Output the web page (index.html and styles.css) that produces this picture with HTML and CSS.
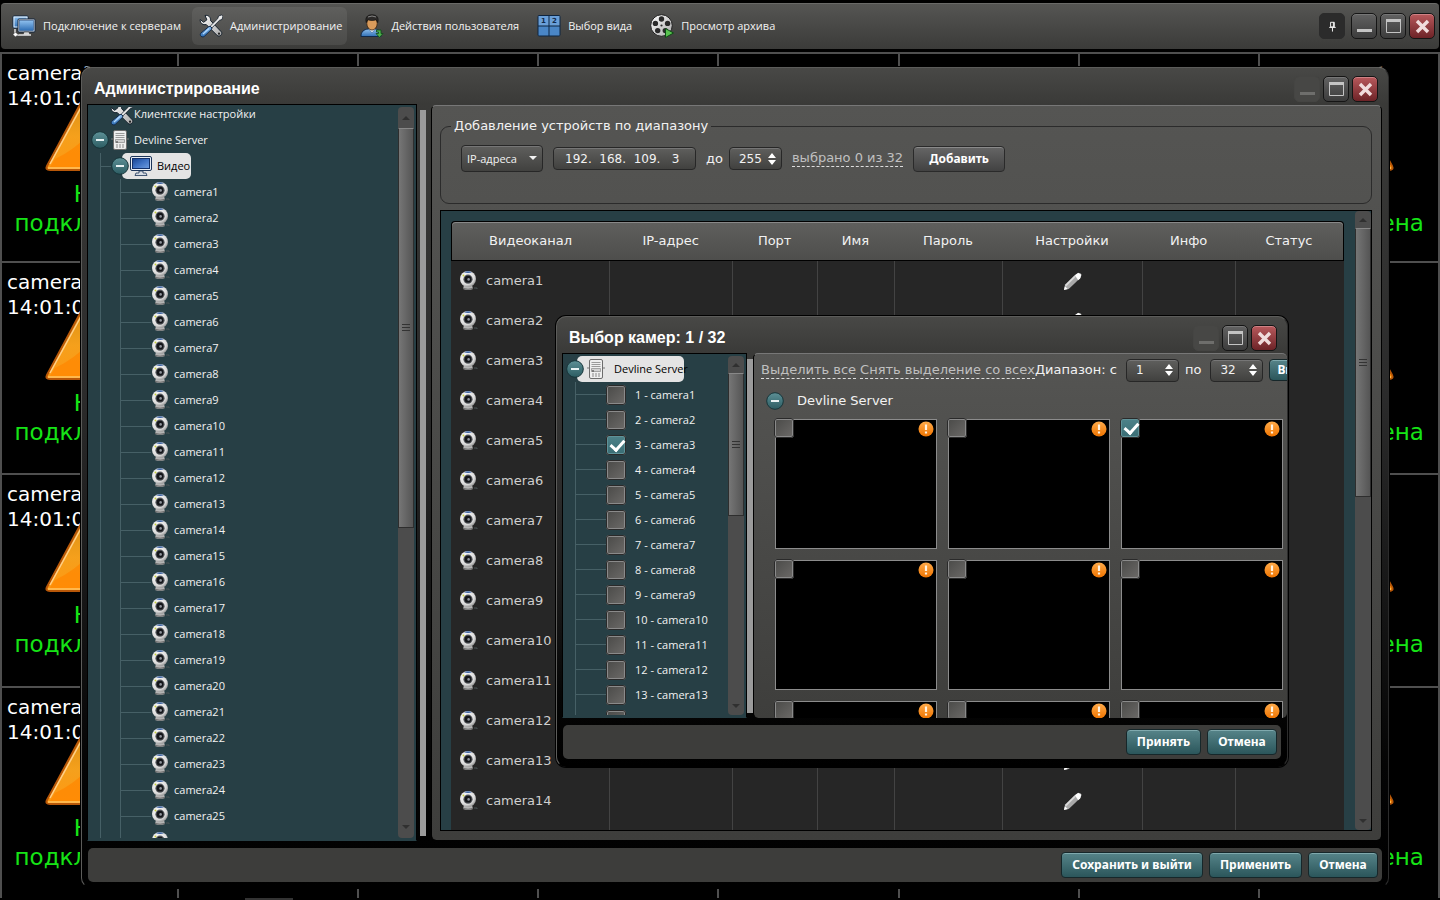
FILE: index.html
```html
<!DOCTYPE html>
<html lang="ru">
<head>
    <meta charset="UTF-8">
    <meta name="viewport" content="width=device-width, initial-scale=1.0">
    <title>Администрирование</title>
    <link rel="stylesheet" href="styles.css">
</head>
<body>

<!-- Icon set -->
<svg class="sprite" aria-hidden="true">
    <defs>
        <linearGradient id="blue" x1="0" y1="0" x2="0" y2="1">
            <stop offset="0" stop-color="#8fc0ee"/><stop offset="1" stop-color="#2f6fb5"/>
        </linearGradient>
        <linearGradient id="screen" x1="0" y1="0" x2="1" y2="1">
            <stop offset="0" stop-color="#16428f"/><stop offset=".5" stop-color="#3f72c4"/><stop offset="1" stop-color="#6f9de0"/>
        </linearGradient>
        <linearGradient id="steel" x1="0" y1="0" x2="1" y2="1">
            <stop offset="0" stop-color="#ffffff"/><stop offset="1" stop-color="#a8a8a8"/>
        </linearGradient>
        <radialGradient id="ball" cx=".4" cy=".35" r=".7">
            <stop offset="0" stop-color="#ffffff"/><stop offset=".7" stop-color="#dcdcdc"/><stop offset="1" stop-color="#8a8a8a"/>
        </radialGradient>
        <linearGradient id="teal" x1="0" y1="0" x2="0" y2="1">
            <stop offset="0" stop-color="#5d9096"/><stop offset="1" stop-color="#2c5c62"/>
        </linearGradient>
        <linearGradient id="orange" x1="0" y1="0" x2="0" y2="1">
            <stop offset="0" stop-color="#ffab4a"/><stop offset="1" stop-color="#ef7400"/>
        </linearGradient>
        <linearGradient id="fire" x1="0" y1="0" x2="0" y2="1">
            <stop offset="0" stop-color="#d08a10"/><stop offset=".6" stop-color="#f5a01c"/><stop offset="1" stop-color="#ff9812"/>
        </linearGradient>
    </defs>
    <symbol id="i-servers" viewBox="0 0 24 24">
        <rect x="1" y="2" width="15" height="12" rx="1" fill="url(#blue)" stroke="#10233a"/>
        <rect x="2" y="3" width="13" height="10" fill="none" stroke="#e4f0fb"/>
        <rect x="6" y="5" width="17" height="13" rx="1" fill="#e6edf5" stroke="#10233a"/>
        <rect x="7.500" y="6.500" width="14" height="10" fill="url(#blue)" stroke="#2b568c" stroke-width=".6"/>
        <path d="M12 18h5l1 3h-7z" fill="#d8d8d8" stroke="#222" stroke-width=".5"/>
        <path d="M3 15v6h16" fill="none" stroke="#e8e8e8" stroke-width="1.4"/>
        <path d="M1 20.500l2.500-2.500 2.500 2.500-2.500 2.500z" fill="#fff" stroke="#333" stroke-width=".5"/>
    </symbol>
    <symbol id="i-tools" viewBox="0 0 24 24">
        <path d="M6 1.500c3-.8 6 1.500 5.500 5l10.700 11.200c2 2.300-1.500 5.800-4 3.800L7.200 10.500C4 11.500.8 9 1.200 5.500l3.500 2.800 3.200-2.500z" fill="url(#steel)" stroke="#14202c"/>
        <circle cx="20" cy="19.700" r="1.100" fill="#222"/>
        <path d="M22.500 1l-3 1-.7 2.600-7.600 7.600 1.700 1.700 7.600-7.600 2.500-.8 1-3.200z" fill="#ececec" stroke="#14202c" stroke-width=".8"/>
        <path d="M10 12.500L2 19c-2.200 2.400 1.200 5.300 3.500 3.200L12.800 15c.6-1.200-1.500-3.300-2.800-2.500z" fill="url(#blue)" stroke="#11294a"/>
        <path d="M10 14.500L4 20.200" stroke="#b8dcff" stroke-width="1.100"/>
    </symbol>
    <symbol id="i-user" viewBox="0 0 24 24">
        <path d="M1 22.500c0-5 3-7 7-7.500h7c4 .5 6 3 6 7.500z" fill="url(#blue)" stroke="#10294a"/>
        <path d="M8.500 15l3.500 4 3.500-4" fill="#dbe9f6" stroke="#3b6799" stroke-width=".6"/>
        <ellipse cx="12" cy="9.500" rx="5.200" ry="6.500" fill="#d99b5b" stroke="#3b2411" stroke-width=".8"/>
        <path d="M6.300 8.500C4.800 4 7 .7 12 .7S19.200 4 17.700 8.500L16.300 5.800c-2.500 1-6 1-8.600 0z" fill="#2c2a29" stroke="#0c0c0c" stroke-width=".6"/>
        <path d="M8 3q4-2 8 0" stroke="#858585" fill="none"/>
        <path d="M16.500 16h4.500v3.500h2l-3.500 4-3.500-4h2.500v-1.500h-2z" fill="#4fb04c" stroke="#0e4a18" stroke-width=".8"/>
    </symbol>
    <symbol id="i-views" viewBox="0 0 24 24">
        <rect x=".5" y="1" width="23" height="21.500" rx="2" fill="#0d2440"/>
        <path d="M1.500 2h10v9.500h-10zM12.500 2h10v9.500h-10z" fill="#6a9fd8"/>
        <path d="M1.500 12.500h10v9h-10zM12.500 12.500h10v9h-10z" fill="#4a86c6"/>
        <text x="4" y="9" class="glyph">1</text>
        <text x="15" y="9" class="glyph">2</text>
    </symbol>
    <symbol id="i-reel" viewBox="0 0 24 24">
        <circle cx="11.500" cy="11.500" r="10.800" fill="url(#steel)" stroke="#1a1a1a"/>
        <g fill="#292929">
            <circle cx="11.500" cy="5" r="2.700"/><circle cx="17.600" cy="9.400" r="2.700"/><circle cx="15.300" cy="16.600" r="2.700"/>
            <circle cx="7.700" cy="16.600" r="2.700"/><circle cx="5.400" cy="9.400" r="2.700"/><circle cx="11.500" cy="11.500" r="1.100"/>
        </g>
        <path d="M15.500 14.500v9l8-4.500z" fill="#58c24f" stroke="#0d4b14"/>
    </symbol>
    <symbol id="i-webcam" viewBox="0 0 20 20">
        <path d="M5 14h8l1 4q-5 2-10 0z" fill="#b5b5b5"/>
        <path d="M4 17.500q5 1.500 10 0" stroke="#666" fill="none"/>
        <path d="M15 17h3v1" stroke="#4a5557" fill="none"/>
        <circle cx="9" cy="8" r="8" fill="url(#ball)"/>
        <path d="M5 1.300q4-2 8 0-4 1.400-8 0" fill="#3a63a4"/>
        <circle cx="9" cy="8.200" r="4.600" fill="#55585c"/>
        <circle cx="9" cy="8.200" r="3.400" fill="#14161a"/>
        <circle cx="9.600" cy="8.400" r="1.300" fill="#90959c"/>
        <circle cx="4.500" cy="4.400" r="1" fill="#c6cf3e"/>
    </symbol>
    <symbol id="i-server" viewBox="0 0 20 20">
        <path d="M1 9h3M16 9h3" stroke="#777"/>
        <rect x="3.500" y=".5" width="13" height="19" rx="1.500" fill="#eee" stroke="#6c6c6c"/>
        <path d="M5.500 3.500h9M5.500 5.500h9M5.500 7.500h9" stroke="#9a9a9a"/>
        <path d="M5.500 9.500h9v3h-9z" fill="#d2d2d2" stroke="#888" stroke-width=".7"/>
        <circle cx="7" cy="12" r="1" fill="#666"/>
        <path d="M6 15h8M6 17h8" stroke="#888" stroke-dasharray="2 1"/>
    </symbol>
    <symbol id="i-monitor" viewBox="0 0 22 20">
        <rect x=".5" y=".5" width="21" height="14" rx="1.500" fill="#e9eef5" stroke="#1c3559"/>
        <rect x="2.500" y="2.500" width="17" height="10" fill="url(#screen)" stroke="#12306a"/>
        <path d="M9 15h4v2h3l1 2.500H5L6 17h3z" fill="#d6dbe2" stroke="#1c3559" stroke-width=".8"/>
    </symbol>
    <symbol id="i-pencil" viewBox="0 0 20 20">
        <path d="M1 19l1-4.500L14 2l4-1 1.500 2-1 3L6 18z" fill="#a9a9a9"/>
        <path d="M12.500 3.500L16 .8l3.200 2-1.200 4-2 2z" fill="#fff"/>
        <path d="M2.500 14.500L13 4" stroke="#dadada" stroke-width="2"/>
        <path d="M1 19l1-4 3 3z" fill="#fff"/>
    </symbol>
    <symbol id="i-minus" viewBox="0 0 18 18">
        <circle cx="9" cy="9" r="8.300" fill="url(#teal)" stroke="#17353a"/>
        <path d="M5 9h8" stroke="#e8f2f3" stroke-width="2"/>
    </symbol>
    <symbol id="i-alert" viewBox="0 0 16 16">
        <circle cx="8" cy="8" r="7.500" fill="url(#orange)"/>
        <path d="M8 3.500v5.500M8 10.500v2" stroke="#fff3e2" stroke-width="2.200"/>
    </symbol>
    <symbol id="i-warning" viewBox="0 0 94 90">
        <path d="M47 3L90 83q2 4-3 4H7q-5 0-3-4z" fill="url(#fire)" stroke="#b85708" stroke-width="2" stroke-linejoin="round"/>
        <path d="M12 76Q30 68 50 48L90 84H7z" fill="#ff8600" opacity=".7"/>
        <path d="M47 8L7 81" stroke="#ffd08a" stroke-width="1.500"/>
        <path d="M5 85h84" stroke="#ffb84d" stroke-width="2"/>
        <path d="M47 30v30M47 68v8" stroke="#fff" stroke-width="8"/>
    </symbol>
    <symbol id="i-updown" viewBox="0 0 8 12">
        <path d="M0 5l4-5 4 5zM0 7l4 5 4-5z" fill="#fff"/>
    </symbol>
    <symbol id="i-min" viewBox="0 0 26 26"><path d="M6 17.500h15" stroke="currentColor" stroke-width="3"/></symbol>
    <symbol id="i-max" viewBox="0 0 26 26"><path d="M6.500 6.500h14v13h-14z" fill="none" stroke="currentColor"/><path d="M6 7.500h15" stroke="currentColor" stroke-width="3"/></symbol>
    <symbol id="i-close" viewBox="0 0 26 26"><path d="M8 8l11 11M19 8L8 19" stroke="currentColor" stroke-width="3.400"/></symbol>
    <symbol id="i-pin" viewBox="0 0 28 28"><path d="M12.500 10h4v5h-4zM11 15.500h7M14.500 16v4M15.500 10v5" fill="none" stroke="currentColor"/></symbol>
    <symbol id="i-up" viewBox="0 0 8 5"><path d="M0 5l4-4 4 4z" fill="currentColor"/></symbol>
    <symbol id="i-down" viewBox="0 0 8 5"><path d="M0 0l4 4 4-4z" fill="currentColor"/></symbol>
</svg>

<header class="toolbar">
    <button class="tool"><svg><use href="#i-servers"/></svg>Подключение к серверам</button>
    <button class="tool active"><svg><use href="#i-tools"/></svg>Администрирование</button>
    <button class="tool"><svg><use href="#i-user"/></svg>Действия пользователя</button>
    <button class="tool"><svg><use href="#i-views"/></svg>Выбор вида</button>
    <button class="tool"><svg><use href="#i-reel"/></svg>Просмотр архива</button>
    <div class="controls">
        <button class="ctl pin" aria-label="Закрепить"><svg><use href="#i-pin"/></svg></button>
        <button class="ctl" aria-label="Свернуть"><svg><use href="#i-min"/></svg></button>
        <button class="ctl" aria-label="Развернуть"><svg><use href="#i-max"/></svg></button>
        <button class="ctl close" aria-label="Закрыть"><svg><use href="#i-close"/></svg></button>
    </div>
</header>

<main class="wall" id="wall"></main>
<div class="wall-edge"></div>

<!-- Administration window -->
<section class="window admin">
    <header class="titlebar">
        <h1>Администрирование</h1>
        <div class="controls">
            <button class="ctl" aria-label="Свернуть" disabled><svg><use href="#i-min"/></svg></button>
            <button class="ctl" aria-label="Развернуть"><svg><use href="#i-max"/></svg></button>
            <button class="ctl close" aria-label="Закрыть"><svg><use href="#i-close"/></svg></button>
        </div>
    </header>

    <div class="content">
        <nav class="tree">
            <div class="tree-view scrolled">
                <div class="node leaf"><svg class="ico-big"><use href="#i-tools"/></svg>Клиентские настройки</div>
                <div class="node"><button class="toggle" aria-label="Свернуть"><svg><use href="#i-minus"/></svg></button><svg class="ico"><use href="#i-server"/></svg>Devline Server</div>
                <div class="branch">
                    <div class="node line"><button class="toggle" aria-label="Свернуть"><svg><use href="#i-minus"/></svg></button><span class="selected"><svg class="ico-mon"><use href="#i-monitor"/></svg>Видео</span></div>
                    <ul class="branch cameras" id="cameras"></ul>
                </div>
            </div>
            <div class="scrollbar"><svg><use href="#i-up"/></svg><div class="track"><div class="thumb thumb-tree"></div></div><svg><use href="#i-down"/></svg></div>
        </nav>
        <div class="splitter"></div>
        <div class="pane">
            <fieldset>
                <legend>Добавление устройств по диапазону</legend>
                <div class="range">
                    <span class="combo"><select aria-label="Тип"><option>IP-адреса</option></select><svg><use href="#i-down"/></svg></span>
                    <input class="field ip" type="text" id="ip-from" aria-label="IP-адрес" value="192.  168.  109.   3">
                    <label for="ip-to">до</label>
                    <span class="spin spin-ip"><input type="text" id="ip-to" value="255"><svg><use href="#i-updown"/></svg></span>
                    <a class="picked" href="#">выбрано 0 из 32</a>
                    <button class="btn gray">Добавить</button>
                </div>
            </fieldset>
            <div class="list">
                <div class="list-view">
                    <table>
                        <colgroup>
                            <col class="c-chan"><col class="c-ip"><col class="c-port"><col class="c-name">
                            <col class="c-pass"><col class="c-set"><col class="c-info"><col>
                        </colgroup>
                        <thead>
                            <tr><th>Видеоканал</th><th>IP-адрес</th><th>Порт</th><th>Имя</th><th>Пароль</th><th>Настройки</th><th>Инфо</th><th>Статус</th></tr>
                        </thead>
                        <tbody id="channels"></tbody>
                    </table>
                </div>
                <div class="scrollbar"><svg><use href="#i-up"/></svg><div class="track"><div class="thumb thumb-list"></div></div><svg><use href="#i-down"/></svg></div>
            </div>
        </div>
    </div>

    <footer class="actions">
        <button class="btn">Сохранить и выйти</button>
        <button class="btn">Применить</button>
        <button class="btn">Отмена</button>
    </footer>
</section>

<!-- Camera picker dialog -->
<section class="window picker">
    <header class="titlebar">
        <h2>Выбор камер: 1 / 32</h2>
        <div class="controls">
            <button class="ctl" aria-label="Свернуть" disabled><svg><use href="#i-min"/></svg></button>
            <button class="ctl" aria-label="Развернуть"><svg><use href="#i-max"/></svg></button>
            <button class="ctl close" aria-label="Закрыть"><svg><use href="#i-close"/></svg></button>
        </div>
    </header>

    <div class="content">
        <nav class="tree">
            <div class="tree-view">
                <div class="node"><button class="toggle" aria-label="Свернуть"><svg><use href="#i-minus"/></svg></button><span class="selected wide"><svg class="ico"><use href="#i-server"/></svg>Devline Server</span></div>
                <ul class="branch checks" id="checks"></ul>
            </div>
            <div class="scrollbar"><svg><use href="#i-up"/></svg><div class="track"><div class="thumb thumb-picker"></div></div><svg><use href="#i-down"/></svg></div>
        </nav>
        <div class="splitter"></div>
        <div class="pane">
            <div class="selection">
                <a href="#">Выделить все</a>
                <a href="#" class="reset">Снять выделение со всех</a>
                <label for="from">Диапазон: с</label>
                <span class="spin"><input type="text" id="from" value="1"><svg><use href="#i-updown"/></svg></span>
                <label for="to">по</label>
                <span class="spin"><input type="text" id="to" value="32"><svg><use href="#i-updown"/></svg></span>
                <button class="btn small">Выделить</button>
            </div>
            <div class="group"><button class="toggle" aria-label="Свернуть"><svg><use href="#i-minus"/></svg></button>Devline Server</div>
            <div class="previews" id="previews"></div>
        </div>
    </div>

    <footer class="actions">
        <button class="btn">Принять</button>
        <button class="btn">Отмена</button>
    </footer>
</section>

<script src="script.js"></script>
</body>
</html>
```
FILE: styles.css
```css
* {
    box-sizing: border-box;
}

body {
    margin: 0;
    height: 100vh;
    display: flex;
    flex-direction: column;
    padding-top: 3px;
    overflow: hidden;
    position: relative;
    background: #000;
    color: #f2f2f2;
    font-family: "DejaVu Sans", Verdana, sans-serif;
    font-size: 13px;
    line-height: 16px;
}

.sprite {
    position: absolute;
    width: 0;
    height: 0;
}

.glyph {
    font: bold 7px "DejaVu Sans", sans-serif;
    fill: #10294a;
}

button, input, select {
    font: inherit;
    color: inherit;
    margin: 0;
    padding: 0;
    border: none;
    background: none;
}

svg {
    display: block;
    flex: none;
}

ul {
    list-style: none;
    margin: 0;
    padding: 0;
}

/* Top toolbar */
.toolbar {
    display: flex;
    align-items: center;
    gap: 6px;
    height: 46px;
    flex: none;
    margin: 0 1px;
    padding: 0 4px 2px;
    border-radius: 4px;
    border-top: 1px solid #6a6a68;
    background: linear-gradient(#555553, #3b3b39);
}

.tool {
    display: flex;
    align-items: center;
    gap: 7px;
    height: 38px;
    padding: 0 5px 0 7px;
    border-radius: 6px;
    white-space: nowrap;
    font-family: "Open Sans", "Segoe UI", sans-serif;
    font-size: 11px;
}

.tool svg {
    width: 24px;
    height: 24px;
}

.tool.active {
    background: linear-gradient(#5f5f5d, #4b4b49);
}

.controls {
    display: flex;
    gap: 3px;
    margin-left: auto;
}

.ctl {
    width: 26px;
    height: 26px;
    border: 1px solid #151515;
    border-radius: 5px;
    box-shadow: inset 0 1px #777;
    background: linear-gradient(#626262, #3c3c3c);
    color: #c4c4c4;
}

.ctl svg {
    width: 26px;
    height: 26px;
    margin: -1px;
}

.ctl:disabled {
    border-color: #454543;
    box-shadow: none;
    background: #474745;
    color: #6e6e6c;
}

.ctl.close {
    background: linear-gradient(#b8595c, #6d2327);
    box-shadow: inset 0 1px #cf8285;
    color: #f0dcdc;
}

.ctl.pin {
    margin-right: 3px;
    background: #2b2b2b;
    border-color: #2b2b2b;
    box-shadow: none;
    color: #fff;
}

/* Video wall behind the windows */
.wall {
    flex: 1;
    display: grid;
    grid-template-columns: 175px repeat(7, 1fr);
    grid-template-rows: 207px repeat(3, 1fr);
    gap: 2px;
    margin-top: 3px;
    padding: 2px 2px 0;
    background: #4f4f4f;
}

.wall-edge {
    flex: none;
    width: 48px;
    height: 2px;
    margin-left: 245px;
    background: #333;
}

.cell {
    background: #000;
    overflow: hidden;
    padding: 7px 5px 0;
    min-width: 0;
    min-height: 0;
}

.cell p {
    margin: 0;
    white-space: nowrap;
    font-size: 20px;
    line-height: 25px;
    color: #fff;
}

.cell svg {
    width: 94px;
    height: 90px;
    margin: -28px auto 0;
}

.cell .lost {
    margin-top: 7px;
    font-size: 23px;
    line-height: 29px;
    text-align: center;
    color: #16e416;
}

/* Windows */
.window {
    position: absolute;
    display: flex;
    flex-direction: column;
    overflow: hidden;
    border: 1px solid #5c5c5a;
    border-right-color: #2c2c2c;
    border-bottom-color: #000;
    border-radius: 10px;
    box-shadow: 0 0 0 1px #000;
    background: linear-gradient(#484846, #3a3a38 36px, #2b2b2b 40%, #050505 85%, #000);
}

.admin {
    top: 67px;
    left: 81px;
    right: 51px;
    bottom: 12px;
    padding-bottom: 5px;
}

.picker {
    top: 316px;
    left: 556px;
    width: 732px;
    height: 451px;
    padding-bottom: 7px;
}

.titlebar {
    flex: none;
    display: flex;
    align-items: center;
    height: 36px;
    padding: 5px 10px 0 12px;
}

.titlebar h1, .titlebar h2 {
    margin: 0;
    font: bold 16px/20px "Liberation Sans", Arial, sans-serif;
    color: #fff;
}

.content {
    flex: 1;
    display: flex;
    min-height: 0;
    margin: 0 6px 0 5px;
}

.picker .content {
    margin-right: 0;
}

.actions {
    flex: none;
    display: flex;
    justify-content: flex-end;
    align-items: center;
    gap: 6px;
    height: 34px;
    margin: 7px 6px 0;
    padding: 0 4px;
    border-radius: 5px;
    background: #3d3d3b;
}

.btn {
    flex: none;
    height: 26px;
    min-width: 70px;
    padding: 0 10px;
    border: 1px solid #16272a;
    border-radius: 4px;
    box-shadow: inset 0 1px #7fa9ad;
    background: linear-gradient(#568489, #2b565b);
    color: #fff;
    font-family: "Noto Sans", Tahoma, sans-serif;
    font-weight: bold;
    font-size: 12px;
}

.btn.gray {
    padding: 0 15px;
    border-color: #2a2a2a;
    box-shadow: inset 0 1px #8a8a8a;
    background: linear-gradient(#666, #424242);
}

.btn.small {
    height: 22px;
    padding: 0 7px;
}

/* Trees */
.tree {
    display: flex;
    flex: none;
    width: 330px;
    padding: 2px;
    border: 1px solid #000;
    border-bottom-color: #273f45;
    background: #273f45;
    font-family: "Open Sans", "Segoe UI", sans-serif;
    font-size: 11px;
}

.picker .tree {
    width: 185px;
}

.tree-view {
    flex: 1;
    min-width: 0;
    overflow: hidden;
}

.scrolled .leaf {
    margin-top: -6px;
}

.node {
    display: flex;
    align-items: center;
    height: 26px;
    padding-left: 1px;
    white-space: nowrap;
}

.node.leaf {
    padding-left: 20px;
}

.toggle {
    flex: none;
    z-index: 1;
    width: 18px;
    height: 18px;
}

.toggle svg {
    width: 18px;
    height: 18px;
}

.ico {
    width: 20px;
    height: 20px;
    margin: 0 4px 0 1px;
}

.ico-big {
    width: 24px;
    height: 24px;
}

.ico-mon {
    width: 22px;
    height: 20px;
    margin-right: 5px;
}

.selected {
    display: flex;
    align-items: center;
    height: 26px;
    margin-left: -7px;
    padding: 0 1px 0 8px;
    border-radius: 5px;
    background: #e4e4e4;
    color: #000;
}

.selected.wide {
    width: 107px;
}

.selected.wide .ico {
    margin-right: 8px;
}

.branch {
    margin-left: 10px;
    border-left: 1px solid #466066;
}

.branch .branch {
    margin-left: 19px;
}

.node.line {
    padding-left: 0;
}

.node.line::before {
    content: "";
    width: 10px;
    border-top: 1px solid #466066;
}

.branch li {
    display: flex;
    align-items: center;
    height: 26px;
    white-space: nowrap;
}

.branch li::before {
    content: "";
    width: 30px;
    border-top: 1px solid #466066;
}

.cameras svg {
    width: 20px;
    height: 20px;
    margin-right: 3px;
}

.checks li {
    height: 25px;
}

.checks input {
    margin-right: 9px;
}

input[type="checkbox"] {
    appearance: none;
    flex: none;
    width: 20px;
    height: 20px;
    border: 1px solid #8a8a8a;
    border-radius: 3px;
    outline: 1px solid #2a2a2a;
    outline-offset: -1px;
    box-shadow: inset 0 0 0 1px #8a8a8a;
    background: linear-gradient(135deg, #4a4a48, #6c6a68);
}

input[type="checkbox"]:checked {
    box-shadow: inset 0 0 0 1px #5f9298;
    background: linear-gradient(#4d8289, #3a6d74);
}

input[type="checkbox"]:checked::before {
    content: "";
    display: block;
    width: 6px;
    height: 11px;
    margin: 1px 0 0 6px;
    border: solid #fff;
    border-width: 0 3px 3px 0;
    transform: rotate(42deg);
}

.scrollbar {
    flex: none;
    display: flex;
    flex-direction: column;
    align-items: center;
    width: 16px;
    border-radius: 4px;
    background: #4c4c4c;
    color: #303030;
}

.scrollbar svg {
    width: 8px;
    height: 5px;
    margin: 6px 0;
}

.admin .tree .scrollbar svg {
    margin: 8px 0;
}

.track {
    flex: 1;
    width: 100%;
}

.thumb {
    display: flex;
    align-items: center;
    justify-content: center;
    border: 1px solid #2e2e2e;
    border-top-color: #888;
    background: linear-gradient(90deg, #767676, #555);
}

.thumb::before {
    content: "";
    width: 8px;
    height: 7px;
    background: repeating-linear-gradient(#333 0 1px, transparent 1px 3px);
}

.thumb-tree {
    height: 58%;
}

.thumb-list {
    height: 46%;
}

.thumb-picker {
    height: 44%;
}

.splitter {
    flex: none;
    width: 6px;
    margin: 6px 4px 5px 3px;
    background: #9b9b9b;
}

.picker .splitter {
    margin: 6px 0 5px;
}

.pane {
    flex: 1;
    display: flex;
    flex-direction: column;
    gap: 6px;
    min-width: 0;
    margin: 1px 0 1px 1px;
    padding: 12px 9px 9px 8px;
    border: 1px solid #000;
    border-top-color: #777;
    border-bottom: none;
    border-radius: 5px;
    background: linear-gradient(#555553, #3e3e3c);
}

/* Range form */
fieldset {
    margin: 0;
    padding: 11px 20px 31px;
    min-width: 0;
    border: 1px solid #2b2b2b;
    border-radius: 9px;
}

legend {
    margin-left: -10px;
    padding: 0 3px;
}

.range {
    display: flex;
    align-items: center;
    gap: 10px;
}

.combo, .spin, .field {
    flex: none;
    border: 1px solid #272727;
    border-radius: 4px;
    box-shadow: inset 0 1px #767676;
    background: linear-gradient(#5f5f5d, #41413f);
}

.combo {
    display: flex;
    align-items: center;
    height: 27px;
    padding: 0 5px;
}

.combo select {
    appearance: none;
    width: 62px;
    font-family: "Open Sans", "Segoe UI", sans-serif;
    font-size: 11px;
}

.combo svg {
    width: 8px;
    height: 5px;
}

.field.ip {
    width: 143px;
    height: 23px;
    padding: 0 11px;
    font-size: 12px;
}

.spin {
    display: flex;
    align-items: center;
    width: 53px;
    height: 23px;
    padding: 0 5px 0 9px;
}

.spin input {
    flex: 1;
    width: 0;
    font-size: 12px;
}

.spin svg {
    width: 8px;
    height: 12px;
}

.spin-ip {
    margin-left: -4px;
}

.picked, .selection a {
    color: #c0c0c0;
    text-decoration: none;
    border-bottom: 1px dashed #ddd;
    white-space: nowrap;
}

/* Channel table */
.list {
    flex: 1;
    display: flex;
    min-height: 0;
    border: 1px solid #000;
    background: #273f45;
}

.list-view {
    flex: 1;
    overflow: hidden;
    padding: 10px 11px 0 10px;
}

table {
    width: 100%;
    table-layout: fixed;
    border-collapse: separate;
    border-spacing: 0;
}

.c-chan { width: 17.7%; }
.c-ip { width: 13.8%; }
.c-port { width: 9.5%; }
.c-name { width: 8.6%; }
.c-pass { width: 12.1%; }
.c-set { width: 15.7%; }
.c-info { width: 10.4%; }

th {
    height: 40px;
    padding: 0;
    border: solid #000;
    border-width: 1px 0;
    box-shadow: inset 0 1px #888;
    background: linear-gradient(#5f5f5d, #4e4e4c);
    font-weight: normal;
}

th:first-child {
    border-left-width: 1px;
    border-top-left-radius: 4px;
}

th:last-child {
    border-right-width: 1px;
    border-top-right-radius: 4px;
}

td {
    height: 40px;
    padding: 0;
    border-left: 1px solid #434343;
    background: #262626;
    color: #cfcfcf;
}

td:first-child {
    border-left: none;
}

.chan {
    display: flex;
    align-items: center;
    gap: 7px;
    padding-left: 8px;
}

.chan svg {
    width: 20px;
    height: 20px;
}

.edit {
    display: block;
    margin: 0 auto;
}

.edit svg {
    width: 19px;
    height: 19px;
}

/* Picker pane */
.picker .pane {
    gap: 0;
    margin: 0;
    padding: 3px 0 0 7px;
    overflow: hidden;
    border-right: none;
}

.selection {
    flex: none;
    display: flex;
    align-items: center;
    gap: 6px;
    height: 26px;
    white-space: nowrap;
}

.selection > * {
    flex: none;
}

.selection .reset {
    margin: 0 -6px 0 -2px;
}

.selection label[for="from"] {
    margin-right: 3px;
}

.selection label[for="to"] {
    margin-right: 3px;
}

.group {
    flex: none;
    display: flex;
    align-items: center;
    gap: 13px;
    height: 36px;
    padding-left: 5px;
}

.previews {
    display: grid;
    grid-template-columns: repeat(3, 162px);
    grid-auto-rows: 130px;
    gap: 11px;
    padding-left: 14px;
}

.preview {
    display: flex;
    justify-content: space-between;
    border: 1px solid #8c8c8c;
    background: #000;
}

.preview input {
    margin: -2px 0 0 -2px;
}

.preview svg {
    width: 16px;
    height: 16px;
    margin: 1px 2px 0 0;
}
```
FILE: script.js
```js
function fill(id, count, render) {
    let html = '';
    for (let i = 0; i < count; i++) {
        html += render(i);
    }
    document.getElementById(id).innerHTML = html;
}

const icon = (name) => `<svg><use href="#i-${name}"/></svg>`;
const CHECKED = 3;

// Cameras go down the columns, four in each
fill('wall', 32, (i) => {
    const num = (i % 8) * 4 + Math.floor(i / 8) + 1;
    return `<div class="cell"><p>camera${num} 4</p><p>14:01:03</p>${icon('warning')}<p class="lost">Не<br>подключена</p></div>`;
});

fill('cameras', 26, (i) => `<li>${icon('webcam')}camera${i + 1}</li>`);

fill('channels', 15, (i) => `
    <tr>
        <td><div class="chan">${icon('webcam')}camera${i + 1}</div></td>
        <td></td><td></td><td></td><td></td>
        <td><button class="edit" aria-label="Настройки camera${i + 1}">${icon('pencil')}</button></td>
        <td></td><td></td>
    </tr>`);

fill('checks', 14, (i) => `
    <li><input type="checkbox" id="check-${i + 1}" ${i + 1 === CHECKED ? 'checked' : ''}>
    <label for="check-${i + 1}">${i + 1} - camera${i + 1}</label></li>`);

fill('previews', 9, (i) => `
    <div class="preview"><input type="checkbox" aria-label="camera${i + 1}" ${i + 1 === CHECKED ? 'checked' : ''}>${icon('alert')}</div>`);
```
